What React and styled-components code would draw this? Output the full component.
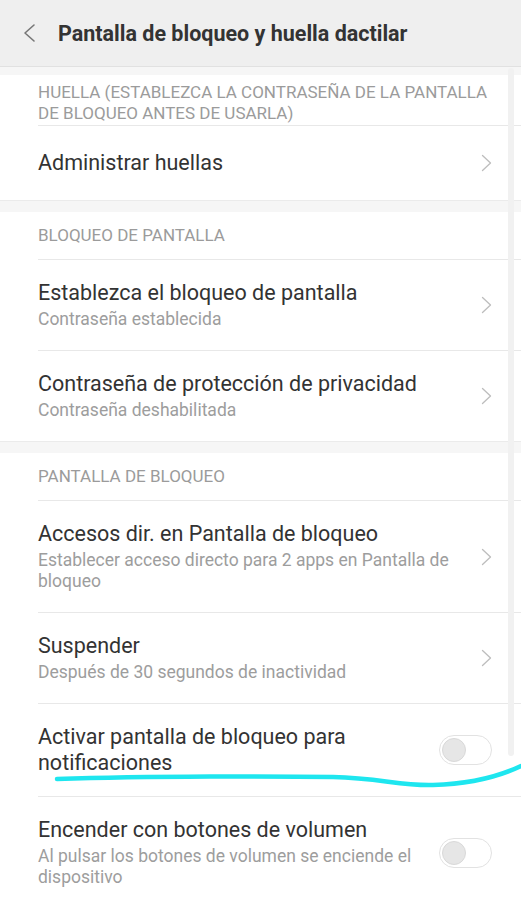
import React from "react";
import styled, { createGlobalStyle } from "styled-components";

const Global = createGlobalStyle`
  html, body { margin: 0; padding: 0; background: #ffffff; }
  body { font-family: Roboto, "Noto Sans", "Liberation Sans", sans-serif; -webkit-font-smoothing: antialiased; }
  * { box-sizing: border-box; }
`;

const Page = styled.div`
  position: relative;
  width: 521px;
  height: 900px;
  overflow: hidden;
  background: #ffffff;
`;

const Header = styled.header`
  height: 67px;
  background: #efefef;
  border-bottom: 1px solid #e1e1e1;
  display: flex;
  align-items: center;
  padding: 0 0 0 22px;
  gap: 11px;
`;

const BackButton = styled.div`
  width: 25px;
  height: 20px;
  display: flex;
  align-items: center;
`;

const Title = styled.h1`
  margin: 0;
  font-size: 21.5px;
  font-weight: 700;
  color: #333333;
  letter-spacing: 0;
`;

const Band = styled.div`
  height: ${(p) => p.$h || 11}px;
  background: #f6f6f6;
  border-top: 1px solid ${(p) => (p.$line ? "#ebebeb" : "transparent")};
`;

const Section = styled.section`
  background: #ffffff;
`;

const SectionHeader = styled.div`
  padding: ${(p) => p.$pad || "13px 29px 13px 38px"};
  font-size: 17px;
  line-height: 21px;
  color: #9b9b9b;
  text-transform: uppercase;
`;

const Row = styled.div`
  margin-left: 38px;
  padding: 20px 29px 20px 0;
  min-height: 75px;
  border-top: 1px solid #e8e8e8;
  display: flex;
  align-items: center;
`;

const TextBlock = styled.div`
  flex: 1;
  min-width: 0;
  max-width: 420px;
  display: flex;
  flex-direction: column;
  gap: 3px;
`;

const RowTitle = styled.div`
  font-size: 21.5px;
  line-height: 26px;
  color: #333333;
`;

const RowSub = styled.div`
  font-size: 17.5px;
  line-height: 21px;
  color: #9d9d9d;
`;

const Slot = styled.div`
  margin-left: auto;
  flex-shrink: 0;
  display: flex;
  align-items: center;
`;

const Track = styled.div`
  width: 53px;
  height: 30px;
  border-radius: 15px;
  border: 1.5px solid #e2e2e2;
  background: #ffffff;
  display: flex;
  align-items: center;
  padding-left: 2px;
`;

const Knob = styled.div`
  width: 24px;
  height: 24px;
  border-radius: 50%;
  background: #e6e6e6;
  border: 1px solid #d9d9d9;
`;

const Scrollbar = styled.div`
  position: absolute;
  right: 7px;
  top: 68px;
  width: 6px;
  height: 688px;
  border-radius: 3px;
  background: #f1f1f1;
`;

const Annotation = styled.svg`
  position: absolute;
  left: 0;
  top: 0;
  pointer-events: none;
`;

const Chevron = () => (
  <svg width="11" height="18" viewBox="0 0 11 18">
    <path d="M1.5 1.5 L9.5 9 L1.5 16.5" fill="none" stroke="#bdbdbd" strokeWidth="1.3" strokeLinecap="round" strokeLinejoin="round" />
  </svg>
);

const Toggle = () => (
  <Track>
    <Knob />
  </Track>
);

const Item = ({ title, sub, toggle }) => (
  <Row>
    <TextBlock>
      <RowTitle>{title}</RowTitle>
      {sub && <RowSub>{sub}</RowSub>}
    </TextBlock>
    <Slot>{toggle ? <Toggle /> : <Chevron />}</Slot>
  </Row>
);

export default function App() {
  return (
    <>
      <Global />
      <Page>
        <Header>
          <BackButton>
            <svg width="14" height="20" viewBox="0 0 14 20">
              <path d="M12 2 L3 10 L12 18" fill="none" stroke="#777777" strokeWidth="1.6" strokeLinecap="round" strokeLinejoin="round" />
            </svg>
          </BackButton>
          <Title>Pantalla de bloqueo y huella dactilar</Title>
        </Header>
        <Band $h={8} />
        <Section>
          <SectionHeader $pad="7px 29px 1px 38px">
            Huella (establezca la contraseña de la pantalla de bloqueo antes de usarla)
          </SectionHeader>
          <Item title="Administrar huellas" />
        </Section>
        <Band $line $h={12} />
        <Section>
          <SectionHeader>Bloqueo de pantalla</SectionHeader>
          <Item title="Establezca el bloqueo de pantalla" sub="Contraseña establecida" />
          <Item title="Contraseña de protección de privacidad" sub="Contraseña deshabilitada" />
        </Section>
        <Band $line $h={12} />
        <Section>
          <SectionHeader>Pantalla de bloqueo</SectionHeader>
          <Item
            title="Accesos dir. en Pantalla de bloqueo"
            sub="Establecer acceso directo para 2 apps en Pantalla de bloqueo"
          />
          <Item title="Suspender" sub="Después de 30 segundos de inactividad" />
          <Item title="Activar pantalla de bloqueo para notificaciones" toggle />
          <Item
            title="Encender con botones de volumen"
            sub="Al pulsar los botones de volumen se enciende el dispositivo"
            toggle
          />
        </Section>
        <Scrollbar />
        <Annotation width="521" height="900" viewBox="0 0 521 900">
          <path
            d="M57 779 C150 776 280 776 333 777 C380 778 400 786 433 785 C470 784 500 776 521 766"
            fill="none"
            stroke="#1ee6ef"
            strokeWidth="4.5"
            strokeLinecap="round"
          />
        </Annotation>
      </Page>
    </>
  );
}
